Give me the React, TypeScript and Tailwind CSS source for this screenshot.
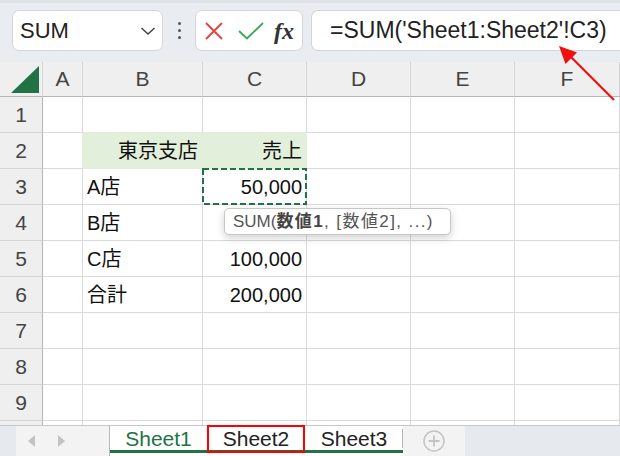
import React from "react";

const FONT = "font-['Liberation_Sans','Noto_Sans_CJK_JP',sans-serif]";

type C = { t?: string; right?: boolean; green?: boolean; sel?: boolean };

const rows: C[][] = [
  [{}, {}, {}, {}, {}, {}],
  [{}, { t: "東京支店", right: true, green: true }, { t: "売上", right: true, green: true }, {}, {}, {}],
  [{}, { t: "A店" }, { t: "50,000", right: true, sel: true }, {}, {}, {}],
  [{}, { t: "B店" }, {}, {}, {}, {}],
  [{}, { t: "C店" }, { t: "100,000", right: true }, {}, {}, {}],
  [{}, { t: "合計" }, { t: "200,000", right: true }, {}, {}, {}],
  [{}, {}, {}, {}, {}, {}],
  [{}, {}, {}, {}, {}, {}],
  [{}, {}, {}, {}, {}, {}],
];

const letters = ["A", "B", "C", "D", "E", "F"];

export default function App() {
  return (
    <div className={`relative w-[620px] h-[456px] overflow-hidden bg-white ${FONT}`}>
      {/* top formula area */}
      <div className="h-[62px] bg-[#e9ecf0] border-t-[3px] border-[#dfe3e8] flex items-start pt-[7px]">
        <div className="ml-[12px] w-[151px] h-[41px] bg-white border border-[#d3d5d8] rounded-[7px] flex items-center pl-[7px] pr-[6px]">
          <span className="text-[22px] text-[#222] leading-none flex-1">SUM</span>
          <svg width="16" height="10" viewBox="0 0 16 10">
            <path d="M1.5 2 L8 8 L14.5 2" fill="none" stroke="#444" strokeWidth="1.5" />
          </svg>
        </div>
        <div className="w-[32px] h-[41px] flex flex-col items-center justify-center gap-[4px]">
          <div className="w-[3px] h-[3px] bg-[#555] rounded-full" />
          <div className="w-[3px] h-[3px] bg-[#555] rounded-full" />
          <div className="w-[3px] h-[3px] bg-[#555] rounded-full" />
        </div>
        <div className="w-[108px] h-[41px] bg-white border border-[#d3d5d8] rounded-[7px] flex items-center pl-[8px]">
          <svg width="20" height="20" viewBox="0 0 20 20" className="mr-[14px]">
            <path d="M2 2 L18 18 M18 2 L2 18" stroke="#e8403d" strokeWidth="1.8" />
          </svg>
          <svg width="26" height="18" viewBox="0 0 26 18" className="mr-[10px]">
            <path d="M1 9 L9 16.5 L25 1" fill="none" stroke="#3aa757" strokeWidth="1.8" />
          </svg>
          <span className="font-['Liberation_Serif',serif] italic font-bold text-[24px] text-[#333] leading-none">fx</span>
        </div>
        <div className="ml-[8px] flex-1 h-[41px] bg-white border border-r-0 border-[#d3d5d8] rounded-l-[7px] flex items-center pl-[18px]">
          <span className="text-[23px] text-[#222] leading-none whitespace-nowrap">=SUM('Sheet1:Sheet2'!C3)</span>
        </div>
      </div>

      {/* grid */}
      <div className="grid grid-cols-[43px_40px_120px_104px_104px_104px_105px]">
        <div className="h-[35px] bg-[#efefef] border-r border-r-[#d4d4d4] border-b border-b-[#b5b5b5] relative">
          <svg width="43" height="35" viewBox="0 0 43 35" className="absolute inset-0">
            <path d="M39 4 L39 31 L11 31 Z" fill="#217346" />
          </svg>
        </div>
        {letters.map((l) => (
          <div
            key={l}
            className="h-[35px] bg-[#efefef] border-r border-r-[#d4d4d4] border-b border-b-[#b5b5b5] flex items-center justify-center text-[21px] text-[#444]"
          >
            {l}
          </div>
        ))}
        {rows.map((r, i) => (
          <React.Fragment key={i}>
            <div className="h-[36px] bg-[#efefef] border-r border-r-[#b5b5b5] border-b border-b-[#d4d4d4] flex items-center justify-center text-[21px] text-[#444]">
              {i + 1}
            </div>
            {r.map((c, j) => {
              const greenBelow = i === 0 && (j === 1 || j === 2);
              const greenRight = i === 1 && j === 0;
              return (
                <div
                  key={j}
                  className={`relative h-[36px] border-r border-b flex items-center px-[4px] text-[20px] text-[#111] whitespace-nowrap ${
                    c.right ? "justify-end" : "justify-start"
                  } ${c.green ? "bg-[#e2efda] border-[#e2efda]" : "border-[#dadada]"} ${
                    greenBelow ? "border-b-[#e2efda]" : ""
                  } ${greenRight ? "border-r-[#e2efda]" : ""}`}
                >
                  {c.t}
                  {c.sel && (
                    <svg className="absolute left-[-1px] top-[-1px]" width="105" height="37" viewBox="0 0 105 37">
                      <rect x="1" y="1" width="103" height="35" fill="none" stroke="#217346" strokeWidth="2" strokeDasharray="6 3" />
                    </svg>
                  )}
                </div>
              );
            })}
          </React.Fragment>
        ))}
        <div className="h-[4px] bg-[#efefef] border-r border-r-[#b5b5b5]" />
        {letters.map((l) => (
          <div key={l} className="h-[4px] border-r border-[#dadada]" />
        ))}
      </div>

      {/* tab bar */}
      <div className="h-[31px] border-t border-[#c4c7cb] flex bg-[#e6e9ed]">
        <div className="w-[16px]" />
        <div className="w-[94px] bg-[#f3f3f3] border-r border-[#b8b8b8] flex items-center pl-[12px] gap-[21px]">
          <svg width="8" height="12" viewBox="0 0 8 12">
            <path d="M7 0 L0 6 L7 12 Z" fill="#c3c3c3" />
          </svg>
          <svg width="8" height="12" viewBox="0 0 8 12">
            <path d="M1 0 L8 6 L1 12 Z" fill="#c3c3c3" />
          </svg>
        </div>
        <div className="flex bg-white h-[30px] items-start">
          <div className="w-[97px] h-[27px] border-b-[3px] border-[#217346] flex items-center justify-center text-[21px] text-[#217346] leading-none">
            Sheet1
          </div>
          <div className="relative w-[98px] h-[27px] border-b-[3px] border-[#217346] flex items-center justify-center text-[21px] text-[#222] leading-none">
            Sheet2
            <div className="absolute left-0 right-0 top-[-1px] bottom-[-3px] border-2 border-[#ff0000]" />
          </div>
          <div className="relative w-[98px] h-[27px] border-b-[3px] border-[#217346] flex items-center justify-center text-[21px] text-[#222] leading-none">
            Sheet3
            <div className="absolute right-0 top-[3px] bottom-[2px] w-px bg-[#b5b5b5]" />
          </div>
        </div>
        <div className="w-[62px] bg-[#f3f3f3] flex items-center justify-center">
          <svg width="22" height="22" viewBox="0 0 22 22">
            <circle cx="11" cy="11" r="10" fill="none" stroke="#c4c4c4" strokeWidth="1.5" />
            <path d="M11 5.5 V16.5 M5.5 11 H16.5" stroke="#c4c4c4" strokeWidth="1.8" />
          </svg>
        </div>
      </div>

      {/* tooltip */}
      <div className="absolute left-[224px] top-[208px] w-[227px] h-[27px] bg-white border border-[#c6c6c6] rounded-[5px] shadow-[0_3px_8px_rgba(0,0,0,0.18)] flex items-center pl-[8px] text-[17px] text-[#555] whitespace-nowrap leading-none">
        SUM(
        <span className="tracking-[1.4px]">
          <span className="font-bold text-[#444]">数値1</span>, [数値2], ...)
        </span>
      </div>

      {/* red arrow */}
      <svg className="absolute inset-0 pointer-events-none" width="620" height="456" viewBox="0 0 620 456">
        <line x1="614" y1="100" x2="568" y2="54" stroke="#f01010" strokeWidth="2.2" />
        <path d="M559 46 L577 52.5 L565.5 64 Z" fill="#f01010" />
      </svg>
    </div>
  );
}
